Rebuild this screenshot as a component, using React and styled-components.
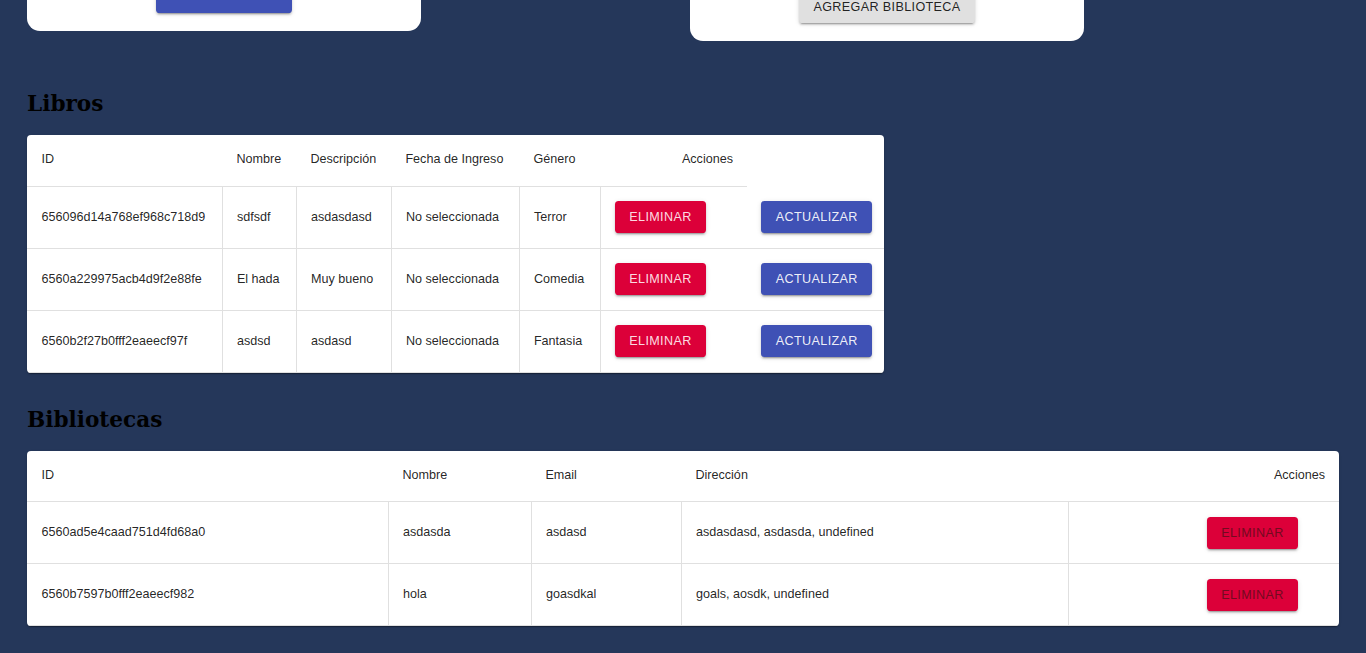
import React from 'react';
import styled, { createGlobalStyle } from 'styled-components';

const libros = [
  { id: '656096d14a768ef968c718d9', nombre: 'sdfsdf', desc: 'asdasdasd', fecha: 'No seleccionada', genero: 'Terror' },
  { id: '6560a229975acb4d9f2e88fe', nombre: 'El hada', desc: 'Muy bueno', fecha: 'No seleccionada', genero: 'Comedia' },
  { id: '6560b2f27b0fff2eaeecf97f', nombre: 'asdsd', desc: 'asdasd', fecha: 'No seleccionada', genero: 'Fantasia' }
];

const bibliotecas = [
  { id: '6560ad5e4caad751d4fd68a0', nombre: 'asdasda', email: 'asdasd', dir: 'asdasdasd, asdasda, undefined' },
  { id: '6560b7597b0fff2eaeecf982', nombre: 'hola', email: 'goasdkal', dir: 'goals, aosdk, undefined' }
];

const libroCols = [195, 74, 95, 128, 81, 147, 137];
const biblioCols = [361, 143, 150, 387, 271];

export default function App() {
  return (
    <>
      <GlobalStyle />
      <Page>
        <TopClip>
          <CardRow>
            <Card $h={190}>
              {/* label sits above the visible area in the screenshot */}
              <Button $variant="primary" $w={136} aria-label="Agregar libro" />
            </Card>
            <Card $h={200}>
              <Button $variant="default">Agregar biblioteca</Button>
            </Card>
          </CardRow>
        </TopClip>

        <Heading>Libros</Heading>
        <Paper $width={857}>
          <Table>
            <colgroup>
              {libroCols.map((w, i) => (
                <col key={i} style={{ width: w }} />
              ))}
            </colgroup>
            <thead>
              <tr>
                <Th>ID</Th>
                <Th>Nombre</Th>
                <Th>Descripción</Th>
                <Th>Fecha de Ingreso</Th>
                <Th>Género</Th>
                <Th $align="right">Acciones</Th>
              </tr>
            </thead>
            <tbody>
              {libros.map(l => (
                <tr key={l.id}>
                  <Td $divider>{l.id}</Td>
                  <Td $divider>{l.nombre}</Td>
                  <Td $divider>{l.desc}</Td>
                  <Td $divider>{l.fecha}</Td>
                  <Td $divider>{l.genero}</Td>
                  <Td>
                    <Button $variant="danger">Eliminar</Button>
                  </Td>
                  <Td>
                    <Button $variant="primary">Actualizar</Button>
                  </Td>
                </tr>
              ))}
            </tbody>
          </Table>
        </Paper>

        <Heading $top={34}>Bibliotecas</Heading>
        <Paper $width={1312}>
          <Table>
            <colgroup>
              {biblioCols.map((w, i) => (
                <col key={i} style={{ width: w }} />
              ))}
            </colgroup>
            <thead>
              <tr>
                <Th>ID</Th>
                <Th>Nombre</Th>
                <Th>Email</Th>
                <Th>Dirección</Th>
                <Th $align="right">Acciones</Th>
              </tr>
            </thead>
            <tbody>
              {bibliotecas.map(b => (
                <tr key={b.id}>
                  <Td $divider>{b.id}</Td>
                  <Td $divider>{b.nombre}</Td>
                  <Td $divider>{b.email}</Td>
                  <Td $divider>{b.dir}</Td>
                  <Td $align="right">
                    <Button $variant="dangerDark" $mr={27}>
                      Eliminar
                    </Button>
                  </Td>
                </tr>
              ))}
            </tbody>
          </Table>
        </Paper>
      </Page>
    </>
  );
}

const GlobalStyle = createGlobalStyle`
  html, body {
    margin: 0;
    background: #25375a;
  }
  body {
    font-family: "Liberation Sans", Arial, sans-serif;
  }
`;

const Page = styled.div`
  padding: 0 27px 27px;
  min-height: 653px;
  box-sizing: border-box;
`;

const TopClip = styled.div`
  height: 41px;
  overflow: hidden;
  display: flex;
  flex-direction: column;
  justify-content: flex-end;
`;

const CardRow = styled.div`
  display: flex;
  align-items: flex-start;
  gap: 269px;
  flex-shrink: 0;
`;

const Card = styled.div`
  width: 394px;
  height: ${p => p.$h}px;
  box-sizing: border-box;
  background: #fff;
  border-radius: 13px;
  display: flex;
  flex-direction: column;
  justify-content: flex-end;
  align-items: center;
  padding-bottom: 18px;
`;

const Heading = styled.h2`
  margin: ${p => p.$top || 50}px 0 19px;
  font-family: "DejaVu Serif", serif;
  font-weight: bold;
  font-size: 21.6px;
  line-height: 25px;
  color: #000;
`;

const Paper = styled.div`
  width: ${p => p.$width}px;
  background: #fff;
  border-radius: 4px;
  overflow: hidden;
  box-shadow: 0px 2px 1px -1px rgba(0, 0, 0, 0.2), 0px 1px 1px 0px rgba(0, 0, 0, 0.14),
    0px 1px 3px 0px rgba(0, 0, 0, 0.12);
`;

const Table = styled.table`
  width: 100%;
  table-layout: fixed;
  border-collapse: collapse;
  font-size: 12.6px;
  color: rgba(0, 0, 0, 0.87);
`;

const Th = styled.th`
  height: 51px;
  box-sizing: border-box;
  padding: 0 14px 0 14.4px;
  font-weight: 400;
  line-height: 21.6px;
  text-align: ${p => p.$align || 'left'};
  border-bottom: 1px solid #e0e0e0;
  white-space: nowrap;
`;

const Td = styled.td`
  height: 62px;
  box-sizing: border-box;
  padding: 0 14px 0 14.4px;
  line-height: 19px;
  vertical-align: middle;
  text-align: ${p => p.$align || 'left'};
  border-bottom: 1px solid #e0e0e0;
  border-right: ${p => (p.$divider ? '1px solid #e0e0e0' : 'none')};
  white-space: nowrap;
`;

const variants = {
  primary: { bg: '#3f51b5', fg: 'rgba(255, 255, 255, 0.92)' },
  danger: { bg: '#dc0039', fg: 'rgba(255, 232, 238, 0.95)' },
  dangerDark: { bg: '#dc0039', fg: '#730a20' },
  default: { bg: '#e0e0e0', fg: 'rgba(0, 0, 0, 0.87)' }
};

const Button = styled.button`
  display: inline-flex;
  align-items: center;
  justify-content: center;
  box-sizing: border-box;
  height: 32px;
  width: ${p => (p.$w ? `${p.$w}px` : 'auto')};
  margin-right: ${p => p.$mr || 0}px;
  padding: 0 14.4px;
  border: 0;
  border-radius: 3.6px;
  background: ${p => variants[p.$variant].bg};
  color: ${p => variants[p.$variant].fg};
  font-family: "Liberation Sans", Arial, sans-serif;
  font-size: 12.6px;
  letter-spacing: 0.36px;
  text-transform: uppercase;
  white-space: nowrap;
  cursor: pointer;
  box-shadow: 0px 3px 1px -2px rgba(0, 0, 0, 0.2), 0px 2px 2px 0px rgba(0, 0, 0, 0.14),
    0px 1px 5px 0px rgba(0, 0, 0, 0.12);
`;
